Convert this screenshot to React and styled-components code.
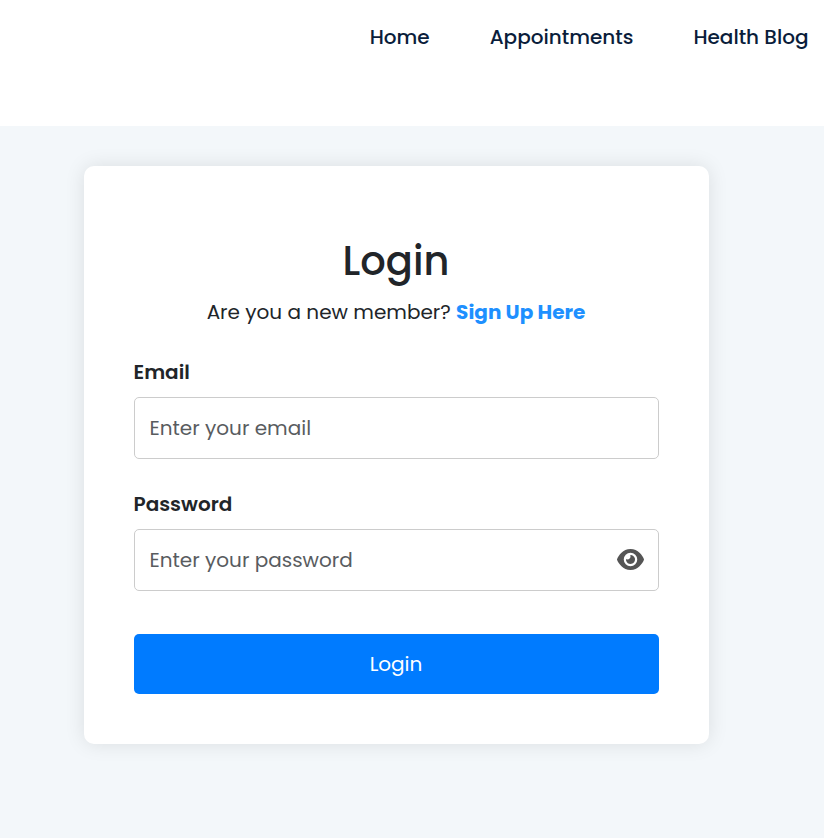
import React from "react";
import styled, { createGlobalStyle } from "styled-components";
import { FaEye } from "react-icons/fa6";

const Global = createGlobalStyle`
  * { box-sizing: border-box; }
  body { margin: 0; background: #f3f7fa; color: #212529; font: 400 20px/30px Poppins, Inter, sans-serif; }
`;
const Page = styled.main`
  min-height: 838px; display: flow-root; overflow: hidden;
`;
const Nav = styled.nav`
  height: 126px; padding: 22px 15.5px; background: #fff;
  display: flex; justify-content: flex-end; align-items: flex-start; gap: 60px;
`;
const NavLink = styled.a`
  color: #0a1d3b; font-weight: 500; white-space: nowrap;
`;
const Card = styled.form`
  margin: 40px 0 0 84px; width: 625px; height: 578px; padding: 65px 50px 50px;
  background: #fff; border-radius: 10px; box-shadow: 0 0 20px rgba(0,0,0,.1);
  display: flex; flex-direction: column;
`;
const Title = styled.h2`
  margin: 0; padding-right: 1px; text-align: center; font-weight: 500; font-size: 40px; line-height: 60px;
`;
const Prompt = styled.p`
  margin: 6px 0 30px; padding-right: 1px; text-align: center;
`;
const SignUp = styled.a`
  color: #1e90ff; font-weight: 700;
`;
const Label = styled.label`
  font-weight: 600; margin: 0 0 10px -0.5px;
`;
const Field = styled.div`
  height: 62px; border: 1px solid #ccc; border-radius: 5px; padding: 0 14px 0 14.5px;
  display: flex; align-items: center; justify-content: space-between; margin-bottom: 30px;
  svg { color: #555; flex: none; margin-bottom: 1px; }
`;
const Input = styled.input`
  flex: 1; min-width: 0; height: 100%; padding: 0; border: 0; outline: 0;
  background: transparent; color: inherit; font: inherit;
  &::placeholder { color: #595c5f; opacity: 1; }
`;
const Button = styled.button`
  margin-top: 13px; height: 60px; border: 0; border-radius: 5px; background: #007bff;
  color: #fff; font: inherit; padding: 0 1px 0 0;
`;

export default function App() {
  return (
    <Page>
      <Global />
      <Nav>
        <NavLink>Home</NavLink>
        <NavLink>Appointments</NavLink>
        <NavLink>Health Blog</NavLink>
      </Nav>
      <Card>
        <Title>Login</Title>
        <Prompt>Are you a new member? <SignUp>Sign Up Here</SignUp></Prompt>
        <Label htmlFor="email">Email</Label>
        <Field><Input id="email" type="email" placeholder="Enter your email" /></Field>
        <Label htmlFor="password">Password</Label>
        <Field>
          <Input id="password" type="password" placeholder="Enter your password" />
          <FaEye size={27} />
        </Field>
        <Button type="button">Login</Button>
      </Card>
    </Page>
  );
}
